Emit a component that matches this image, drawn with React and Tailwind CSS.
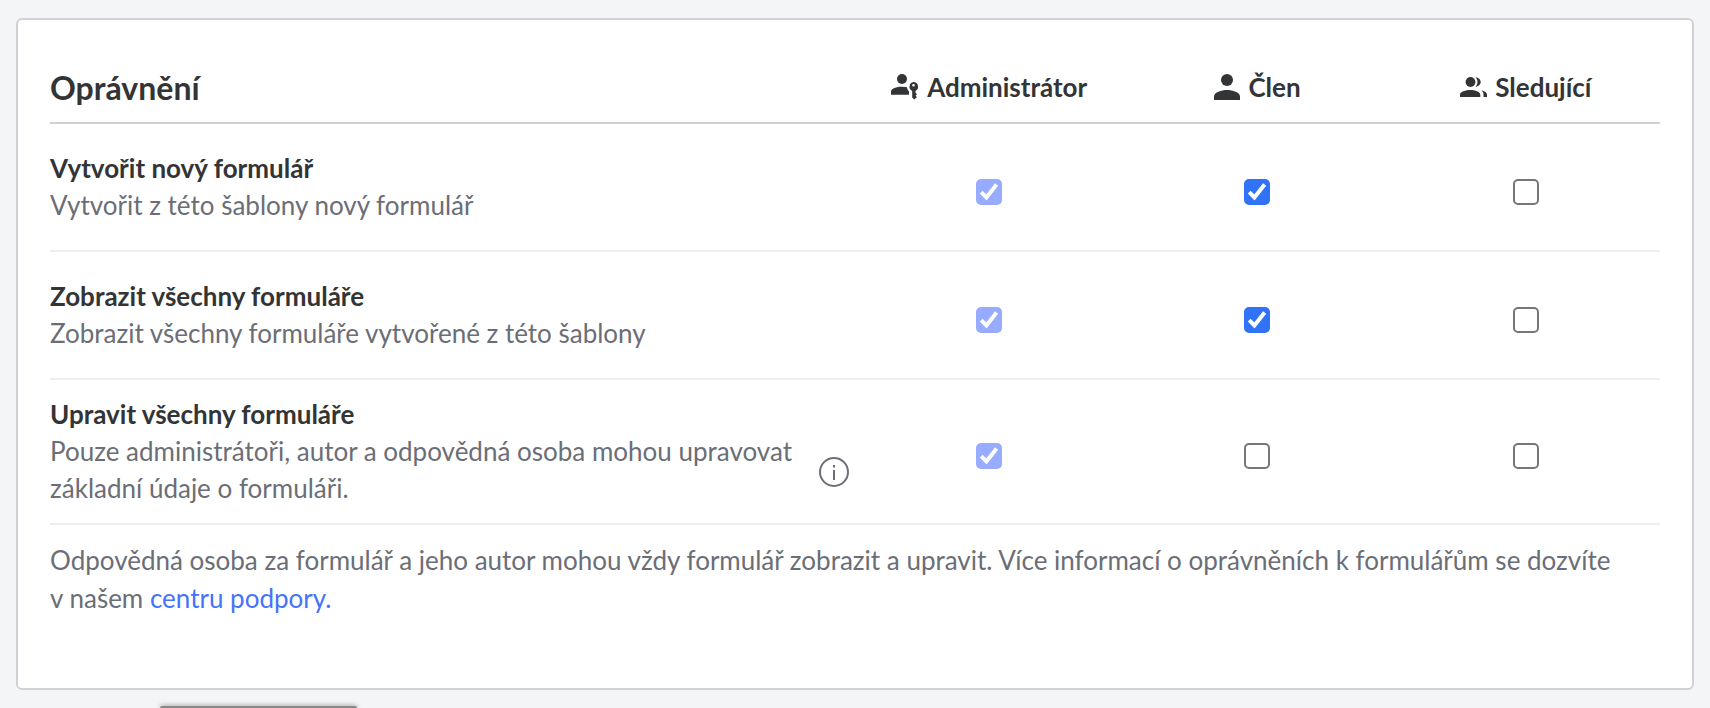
import React from "react";

function AdminIcon() {
  return (
    <svg aria-hidden="true" width="28" height="26" viewBox="0 0 28 26" fill="currentColor">
      <circle cx="11" cy="5" r="5" />
      <path d="M0 20.700v-3c0-3.200 5.500-5 11-5 1.800 0 3.500.2 5 .6.200 1.800.8 3 2 4.100v3.300z" />
      <path fillRule="evenodd" d="M22.500 8a4.700 4.700 0 0 1 2 8.900v1.900l1.500 1.400-1.500 1.500 1.500 1.400-2.800 2.400-2-2v-6.600A4.700 4.700 0 0 1 22.500 8zm0 2a1.300 1.300 0 1 0 0 2.600 1.300 1.300 0 0 0 0-2.600z" />
    </svg>
  );
}

function MemberIcon() {
  return (
    <svg aria-hidden="true" width="26" height="26" viewBox="0 0 26 26" fill="currentColor">
      <circle cx="13" cy="6" r="6" />
      <path d="M13 16c-5.500 0-13 2.200-13 6.500V26h26v-3.500C26 18.200 18.500 16 13 16z" />
    </svg>
  );
}

function FollowerIcon() {
  return (
    <svg aria-hidden="true" width="27" height="20" viewBox="0 0 27 20" fill="currentColor">
      <circle cx="10.500" cy="5" r="4.900" />
      <path d="M10.300 13C6 13 0 14.600 0 17.700V20h20.300v-2.300c0-3.100-5.500-4.700-10-4.700z" />
      <path d="M15.500.2c2.900.2 5.200 2.300 5.200 4.800s-2.300 4.600-5.200 4.800c1.200-1.300 2-3 2-4.800s-.8-3.500-2-4.800z" />
      <path d="M21.500 13.200c3 .7 5.500 2.200 5.500 4.400V20h-3.500v-2.400c0-1.700-.7-3.200-2-4.400z" />
    </svg>
  );
}

function InfoIcon() {
  return (
    <svg aria-hidden="true" width="30" height="30" viewBox="0 0 30 30" fill="none" stroke="currentColor" strokeWidth="2">
      <circle cx="15" cy="15" r="14" />
      <path d="M15 13v10" />
      <path d="M15 8v2.400" />
    </svg>
  );
}

const roles = [
  { id: "admin", label: "Administrátor", Icon: AdminIcon },
  { id: "member", label: "Člen", Icon: MemberIcon },
  { id: "follower", label: "Sledující", Icon: FollowerIcon },
];

const permissions = [
  {
    id: "create",
    title: "Vytvořit nový formulář",
    description: "Vytvořit z této šablony nový formulář",
    allowed: { admin: true, member: true, follower: false },
  },
  {
    id: "view",
    title: "Zobrazit všechny formuláře",
    description: "Zobrazit všechny formuláře vytvořené z této šablony",
    allowed: { admin: true, member: true, follower: false },
  },
  {
    id: "edit",
    title: "Upravit všechny formuláře",
    description:
      "Pouze administrátoři, autor a odpovědná osoba mohou upravovat základní údaje o formuláři.",
    info: true,
    allowed: { admin: true, member: false, follower: false },
  },
];

function Checkbox({ labelledBy, defaultChecked, disabled }) {
  return (
    <span className="mt-1 inline-grid align-middle">
      <input
        type="checkbox"
        aria-labelledby={labelledBy}
        defaultChecked={defaultChecked}
        disabled={disabled}
        className="peer col-start-1 row-start-1 size-[26px] appearance-none rounded-[5px] border-2 border-[#767676] bg-white checked:border-[#3173f6] checked:bg-[#3173f6] disabled:border-[#97abff] disabled:bg-[#97abff]"
      />
      <svg
        aria-hidden="true"
        viewBox="0 0 26 26"
        className="pointer-events-none invisible col-start-1 row-start-1 size-[26px] text-white peer-checked:visible"
        fill="none"
        stroke="currentColor"
        strokeWidth="4"
      >
        <path d="M5.200 13.200 10.400 18.500 20.600 5.500" />
      </svg>
    </span>
  );
}

export default function App() {
  return (
    <div className="min-h-screen overflow-hidden bg-[#f4f5f7] px-4 pt-[18px] font-['Lato',sans-serif] text-[26px] leading-[37px] text-[#6b6e76]">
      <main className="rounded-md border-2 border-[#d0d0d7] bg-white px-8 pt-8 pb-[71px]">
        <table className="w-full table-fixed border-collapse">
          <thead>
            <tr className="h-[71px] border-b-2 border-[#d0d0d7] text-[#333436]">
              <th scope="col" className="w-1/2 text-left text-[32px] font-bold">
                Oprávnění
              </th>
              {roles.map(({ id, label, Icon }) => (
                <th key={id} id={id} scope="col" className="font-bold">
                  <span className="flex items-center justify-center gap-2">
                    <Icon />
                    {label}
                  </span>
                </th>
              ))}
            </tr>
          </thead>
          <tbody>
            {permissions.map((permission) => (
              <tr key={permission.id} className="h-32 border-b-2 border-[#eeeeef]">
                <th scope="row" className="py-4 text-left font-normal">
                  <div className="flex gap-5">
                    <div className="flex-1">
                      <div id={permission.id} className="font-bold text-[#333436]">
                        {permission.title}
                      </div>
                      <p>{permission.description}</p>
                    </div>
                    {permission.info && (
                      <button type="button" aria-label="Více informací" className="mr-1.5 mb-5 self-end">
                        <InfoIcon />
                      </button>
                    )}
                  </div>
                </th>
                {roles.map((role) => (
                  <td key={role.id} className="text-center">
                    <Checkbox
                      labelledBy={`${permission.id} ${role.id}`}
                      defaultChecked={permission.allowed[role.id]}
                      disabled={role.id === "admin"}
                    />
                  </td>
                ))}
              </tr>
            ))}
          </tbody>
        </table>
        <p className="pt-4 leading-[38px]">
          Odpovědná osoba za formulář a jeho autor mohou vždy formulář zobrazit a upravit. Více
          informací o oprávněních k formulářům se dozvíte v&nbsp;našem{" "}
          <a href="#podpora" className="text-[#4573fb]">
            centru podpory.
          </a>
        </p>
      </main>
      <div className="mt-4 ml-36 h-0.5 w-[197px] rounded-t bg-[#888888] shadow-[0_0_5px_#00000099]" />
    </div>
  );
}
